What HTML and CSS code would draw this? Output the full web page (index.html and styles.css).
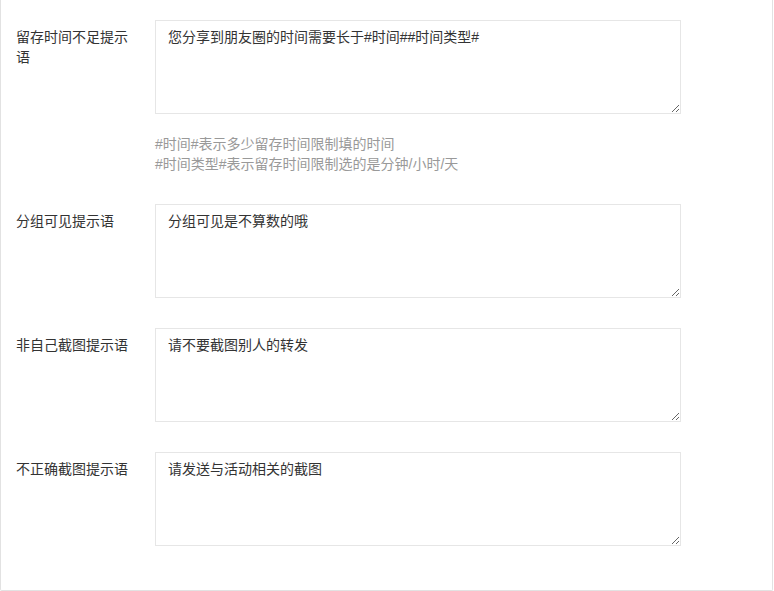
FILE: index.html
```html
<!DOCTYPE html>
<html lang="zh-CN">
<head>
<meta charset="utf-8">
<title>提示语设置</title>
<link rel="stylesheet" href="styles.css">
</head>
<body>
<div class="card">
  <form class="form">
    <div class="form-item">
      <label class="form-label">留存时间不足提示语</label>
      <div class="input-block">
        <textarea class="textarea">您分享到朋友圈的时间需要长于#时间##时间类型#</textarea>
        <div class="word-aux">#时间#表示多少留存时间限制填的时间<br>#时间类型#表示留存时间限制选的是分钟/小时/天</div>
      </div>
    </div>
    <div class="form-item">
      <label class="form-label">分组可见提示语</label>
      <div class="input-block">
        <textarea class="textarea">分组可见是不算数的哦</textarea>
      </div>
    </div>
    <div class="form-item">
      <label class="form-label">非自己截图提示语</label>
      <div class="input-block">
        <textarea class="textarea">请不要截图别人的转发</textarea>
      </div>
    </div>
    <div class="form-item">
      <label class="form-label">不正确截图提示语</label>
      <div class="input-block">
        <textarea class="textarea">请发送与活动相关的截图</textarea>
      </div>
    </div>
  </form>
</div>
</body>
</html>
```

FILE: styles.css
```css
html, body {
  margin: 0;
  padding: 0;
  background: #ffffff;
}

body {
  font-family: "Helvetica Neue", Helvetica, "Liberation Sans", "Noto Sans CJK SC", sans-serif;
  font-size: 14px;
  color: #333333;
}

.card {
  width: 773px;
  box-sizing: border-box;
  background: #ffffff;
  border: 1px solid #e2e2e2;
  border-top: 0;
  border-radius: 0 0 2px 2px;
  padding: 20px 15px 14px 15px;
}

.form {
  margin: 0;
}

.form-item {
  display: flex;
  align-items: flex-start;
  margin-bottom: 30px;
}

.form-label {
  flex: 0 0 139px;
  box-sizing: border-box;
  width: 139px;
  padding: 7px 20px 0 0;
  line-height: 20px;
  font-size: 14px;
  color: #333333;
}

.input-block {
  display: flex;
  flex-direction: column;
}

.textarea {
  display: block;
  box-sizing: border-box;
  width: 526px;
  height: 94px;
  margin: 0;
  padding: 6px 12px;
  border: 1px solid #e6e6e6;
  border-radius: 0;
  background: #ffffff;
  font-family: "Helvetica Neue", Helvetica, "Liberation Sans", "Noto Sans CJK SC", sans-serif;
  font-size: 14px;
  line-height: 20px;
  color: #333333;
  outline: none;
  resize: vertical;
}

.word-aux {
  padding-top: 20px;
  font-size: 14px;
  line-height: 20px;
  color: #999999;
}
```
